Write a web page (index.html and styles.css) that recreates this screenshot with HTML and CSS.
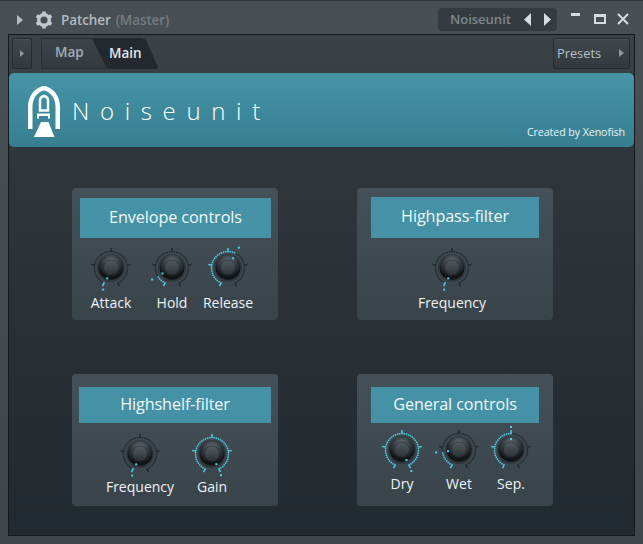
FILE: index.html
```html
<!DOCTYPE html>
<html lang="en">
<head>
<meta charset="utf-8">
<title>Patcher (Master)</title>
<link rel="stylesheet" href="styles.css">
</head>
<body>
<div class="window">
  <header class="titlebar">
    <svg class="tri-small" width="6" height="10" viewBox="0 0 6 10"><path d="M0 0l6 5-6 5z"/></svg>
    <svg class="gear" width="18" height="18" viewBox="0 0 18 18">
      <circle cx="9" cy="9" r="5.300"/>
      <path d="M9 0.500V3.500M9 14.500V17.500M1.640 4.750L4.240 6.250M13.760 11.750L16.360 13.250M1.640 13.250L4.240 11.750M13.760 6.250L16.360 4.750"/>
    </svg>
    <span class="title-main">Patcher</span>
    <span class="title-sub">(Master)</span>
    <div class="pill">
      <span class="pill-text">Noiseunit</span>
      <svg class="pill-arrow" width="7" height="13" viewBox="0 0 7 13"><path d="M7 0v13L0 6.500z"/></svg>
      <svg class="pill-arrow" width="7" height="13" viewBox="0 0 7 13"><path d="M0 0v13l7-6.500z"/></svg>
    </div>
    <div class="win-controls">
      <span class="win-min"></span>
      <span class="win-max"></span>
      <svg class="win-close" width="12" height="12" viewBox="0 0 12 12"><path d="M1 1l10 10M11 1L1 11"/></svg>
    </div>
  </header>
  <main class="inner">
    <nav class="toolbar">
      <button class="tool-btn square"><svg width="4" height="7" viewBox="0 0 4 7"><path d="M0 0l4 3.500-4 3.500z"/></svg></button>
      <div class="tabs">
        <span class="tab-map">Map</span>
        <span class="tab-main">Main</span>
      </div>
      <button class="tool-btn presets"><span>Presets</span><svg width="5" height="8" viewBox="0 0 5 8"><path d="M0 0l5 4-5 4z"/></svg></button>
    </nav>
    <section class="banner">
      <svg class="logo" width="34" height="52" viewBox="0 0 34 52">
        <path class="logo-arch" d="M3.250 43V21C3.250 11 9 4 17 2 25 4 30.750 11 30.750 21V43"/>
        <path class="logo-rocket" d="M13 24.500V14.500C13 12 15 10.500 17 10 19 10.500 21 12 21 14.500V24.500z"/>
        <path class="logo-solid" d="M10 27.500h13v5h-2v-2.500H12v2.500h-2zM14 36h7.500l6 15H7z"/>
      </svg>
      <h1 class="banner-title">Noiseunit</h1>
      <span class="credit">Created by Xenofish</span>
    </section>
    <div class="panels">
      <section class="card card-env">
        <h2 class="card-title">Envelope controls</h2>
        <div class="knobs">
          <figure class="knob"><svg data-a="-160" data-v="-155" width="56" height="56"></svg><figcaption>Attack</figcaption></figure>
          <figure class="knob"><svg data-a="-120" data-v="-120" width="56" height="56"></svg><figcaption>Hold</figcaption></figure>
          <figure class="knob"><svg data-a="28" data-v="28" width="56" height="56"></svg><figcaption>Release</figcaption></figure>
        </div>
      </section>
      <section class="card card-high">
        <h2 class="card-title">Highpass-filter</h2>
        <div class="knobs">
          <figure class="knob"><svg data-a="-160" data-v="-155" width="56" height="56"></svg><figcaption>Frequency</figcaption></figure>
        </div>
      </section>
      <section class="card card-shelf">
        <h2 class="card-title">Highshelf-filter</h2>
        <div class="knobs">
          <figure class="knob"><svg data-a="-160" data-v="-155" width="56" height="56"></svg><figcaption>Frequency</figcaption></figure>
          <figure class="knob"><svg data-a="157" data-v="155" width="56" height="56"></svg><figcaption>Gain</figcaption></figure>
        </div>
      </section>
      <section class="card card-gen">
        <h2 class="card-title">General controls</h2>
        <div class="knobs">
          <figure class="knob"><svg data-a="156" data-v="155" width="56" height="56"></svg><figcaption>Dry</figcaption></figure>
          <figure class="knob"><svg data-a="-96" data-v="-96" width="56" height="56"></svg><figcaption>Wet</figcaption></figure>
          <figure class="knob"><svg data-a="0" data-v="0" width="56" height="56"></svg><figcaption>Sep.</figcaption></figure>
        </div>
      </section>
    </div>
  </main>
</div>
<script src="knobs.js"></script>
</body>
</html>
```
FILE: styles.css
```css
* { box-sizing: border-box; margin: 0; padding: 0; }
html, body { width: 643px; height: 544px; overflow: hidden; background: #42494f; }
body { font-family: "Open Sans", "Noto Sans", sans-serif; }

.window {
  width: 643px; height: 544px;
  display: flex; flex-direction: column;
  padding: 0 8px 8px;
  background: linear-gradient(#484f55, #3f464c);
  border-top: 1px solid #2f353a;
}

.titlebar { height: 33px; flex: none; display: flex; align-items: center; padding: 4px 0 0 9px; }
.tri-small { fill: #b7bec2; }
.gear { margin-left: 12px; fill: none; stroke: #c2c9cd; }
.gear circle { stroke-width: 3.400; }
.gear path { stroke-width: 3.600; }
.title-main { margin-left: 8px; font-size: 13.500px; font-weight: 600; color: #b3bbc0; letter-spacing: -.1px; }
.title-sub { margin-left: 5px; font-size: 13.500px; font-weight: 600; color: #737c82; letter-spacing: -.1px; }
.pill {
  margin-left: auto; width: 119px; height: 23px; margin-top: -1px;
  display: flex; align-items: center;
  padding-left: 12px;
  background: #343c42; border-radius: 4px;
}
.pill-text { font-size: 13.200px; font-weight: 600; color: #7c868c; width: 63px; letter-spacing: -.1px; }
.pill-arrow { fill: #d5dde1; margin-left: 11px; }
.pill-arrow + .pill-arrow { margin-left: 13px; }
.win-controls { width: 78px; display: flex; align-items: center; padding-left: 14px; flex: none; height: 20px; margin-top: -2px; }
.win-min { width: 9px; height: 3px; background: #d5dce0; margin-top: -8px; }
.win-max { width: 12px; height: 10px; border: 2px solid #d5dce0; border-top-width: 3px; margin-left: 14px; margin-top: 1px; }
.win-close { margin-left: 11px; fill: none; stroke: #d5dce0; stroke-width: 2; margin-top: 1px; }

.inner {
  flex: 1; display: flex; flex-direction: column;
  border: 1px solid #14191c;
  background: linear-gradient(#2f363c 112px, #212a30);
}

.toolbar { height: 38px; flex: none; display: flex; align-items: center; padding: 0 4px 1px 3px; background: linear-gradient(#3b4349, #383f45); }
.tool-btn {
  height: 31px; border: 1px solid #252b30; border-radius: 2px;
  background: linear-gradient(#3f474d, #33393f);
  box-shadow: inset 0 1px 0 #495157;
  display: flex; align-items: center; font-family: inherit;
}
.tool-btn svg { fill: #8d969b; }
.square { width: 20px; justify-content: center; }
.presets { width: 77px; margin-left: auto; padding: 0 5px 2px 3px; justify-content: space-between; font-size: 12.800px; color: #b4c1c9; }
.tabs { margin-left: 9px; display: flex; height: 31px; }
.tab-map {
  width: 64px; padding-left: 13px;
  border: 1px solid #2a3035; border-right: 0; border-radius: 2px 0 0 2px;
  background: linear-gradient(#3d454b, #32393f);
  font-size: 13.500px; font-weight: 600; color: #a2aeb5; line-height: 26px;
}
.tab-main {
  width: 66px; margin-left: -13px; padding-left: 17px;
  font-size: 13.500px; font-weight: 600; color: #e0e8ec; line-height: 30px;
  background: #23292e;
  clip-path: polygon(0 0, 50px 0, 54px 2px, 66px 29px, 65px 31px, 15px 31px);
}

.banner {
  height: 74px; flex: none; margin: 0 0 1px; padding: 0 9px 0 18px;
  display: flex; align-items: center;
  background: linear-gradient(#4594a6, #367f91);
  border-radius: 5px;
}
.logo { flex: none; margin-top: 3px; }
.logo-arch { fill: none; stroke: #fff; stroke-width: 4.500; }
.logo-rocket { fill: none; stroke: #fff; stroke-width: 2.500; }
.logo-solid { fill: #fff; }
.banner-title { margin-left: 11px; margin-top: 2px; font-size: 24px; font-weight: 300; letter-spacing: 10.650px; color: #fff; line-height: 30px; }
.credit { margin-left: auto; align-self: flex-end; margin-bottom: 8px; font-size: 10.700px; color: #e6f3f6; letter-spacing: -.1px; }

.panels {
  display: grid; grid-template-columns: 206px 196px; grid-template-rows: 132px 132px;
  column-gap: 79px; row-gap: 54px;
  padding: 40px 0 0 63px;
}
.card {
  border-radius: 4px;
  background: linear-gradient(#465058, #38434a);
  display: flex; flex-direction: column;
}
.card-env { padding: 10px 7px 0 8px; }
.card-high { padding: 9px 14px 0 14px; }
.card-shelf { padding: 13px 7px 0 7px; }
.card-gen { padding: 13px 14px 0 14px; }
.card-title {
  height: 40px; flex: none; background: #4592a6;
  font-size: 16.200px; font-weight: 400; color: #eef8fa;
  text-align: center; line-height: 38px; letter-spacing: -.1px;
}
.card-high .card-title { height: 41px; }
.card-shelf .card-title, .card-gen .card-title { height: 36px; line-height: 34px; }

.knobs { display: flex; justify-content: flex-start; }
.knob { display: flex; flex-direction: column; align-items: center; height: 72px; }
.knob svg { display: block; flex: none; overflow: visible; }
.knob figcaption { font-size: 14px; line-height: 20px; color: #eef3f5; margin-top: -3px; white-space: nowrap; }

.card-env .knobs { padding: 2px 0 0 1px; }
.card-env .knob { width: 56px; }
.card-env .knob:nth-child(1) { width: 60px; }
.card-env .knob:nth-child(2) { margin-left: 3px; }
.card-high .knobs { padding: 2px 6px 0 0; justify-content: center; }
.card-shelf .knobs { padding-top: 3px; }
.card-shelf .knob { width: 72px; }
.card-shelf .knob:nth-child(1) { margin-left: 25px; }
.card-shelf .knob figcaption { margin-top: -5px; }
.card-gen .knobs { margin-top: -1px; }
.card-gen .knob { width: 56px; }
.card-gen .knob:nth-child(1) { margin-left: 3px; }
.card-gen .knob:nth-child(2) { margin-left: 1px; }
.card-gen .knob:nth-child(3) { margin-left: -4px; }
.card-gen .knob figcaption { margin-top: -4px; }
```
FILE: knobs.js
```js
var NS = "http://www.w3.org/2000/svg";
var C = 28, MIN = -155, MAX = 155, CYAN = "#4cd0e4", OFF = "#23292e";
function el(parent, name, attrs) {
  var n = document.createElementNS(NS, name);
  for (var k in attrs) n.setAttribute(k, attrs[k]);
  parent.appendChild(n);
  return n;
}
function pos(a, r) {
  var t = a * Math.PI / 180;
  return [C + r * Math.sin(t), C - r * Math.cos(t)];
}
document.querySelectorAll(".knob svg").forEach(function (s, i) {
  var a = +s.dataset.a, v = +s.dataset.v, id = "k" + i;
  var defs = el(s, "defs", {});
  var g1 = el(defs, "radialGradient", { id: id + "o", cx: "50%", cy: "28%", r: "78%" });
  el(g1, "stop", { offset: "0", "stop-color": "#69737a" });
  el(g1, "stop", { offset: ".45", "stop-color": "#333a40" });
  el(g1, "stop", { offset: ".8", "stop-color": "#0e1113" });
  el(g1, "stop", { offset: "1", "stop-color": "#1d2226" });
  var g2 = el(defs, "linearGradient", { id: id + "i", x1: 0, y1: 0, x2: 0, y2: 1 });
  el(g2, "stop", { offset: "0", "stop-color": "#525b62" });
  el(g2, "stop", { offset: "1", "stop-color": "#2c3237" });

  for (var d = MIN; d <= MAX; d += 7.750) {
    var on = d <= v, p = pos(d, 16.500);
    el(s, "rect", { x: p[0] - .75, y: p[1] - .75, width: 1.500, height: 1.500, fill: on ? CYAN : OFF });
  }
  [MIN, -80, 0, 80, MAX].forEach(function (t) {
    var on = t <= v, p1 = pos(t, 16.500), p2 = pos(t, 20);
    el(s, "line", { x1: p1[0], y1: p1[1], x2: p2[0], y2: p2[1], stroke: on ? CYAN : OFF, "stroke-width": 1.500 });
  });
  el(s, "circle", { cx: C, cy: C, r: 14, fill: "#23292e", opacity: .5 });
  el(s, "circle", { cx: C, cy: C - .5, r: 12.500, fill: "url(#" + id + "o)" });
  el(s, "circle", { cx: C, cy: C - .5, r: 7.500, fill: "url(#" + id + "i)", stroke: "#23292d", "stroke-width": .6 });
  var dot = pos(a, 11), out = pos(a, 23);
  el(s, "rect", { x: dot[0] - 1, y: dot[1] - 1, width: 2, height: 2, fill: CYAN });
  el(s, "rect", { x: out[0] - 1, y: out[1] - 1, width: 2, height: 2, fill: CYAN });
});
```
